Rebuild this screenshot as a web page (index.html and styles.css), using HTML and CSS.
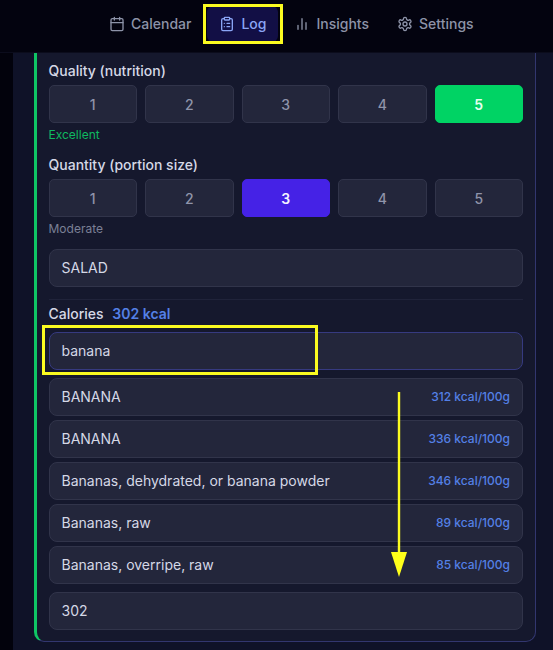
FILE: index.html
```html
<!DOCTYPE html>
<html lang="en">
<head>
  <meta charset="UTF-8">
  <meta name="viewport" content="width=device-width, initial-scale=1.0">
  <title>Log</title>
  <link rel="stylesheet" href="styles.css">
</head>
<body>
  <nav class="topnav">
    <a class="tab">
      <svg class="icon" viewBox="0 0 24 24"><path d="M8 2v4M16 2v4"/><rect x="3" y="4" width="18" height="18" rx="2"/><path d="M3 10h18"/></svg>
      Calendar
    </a>
    <a class="tab active">
      <svg class="icon" viewBox="0 0 24 24"><rect x="8" y="2" width="8" height="4" rx="1"/><path d="M16 4h2a2 2 0 0 1 2 2v14a2 2 0 0 1-2 2H6a2 2 0 0 1-2-2V6a2 2 0 0 1 2-2h2"/><path d="M12 11h4M12 16h4M8 11h.01M8 16h.01"/></svg>
      Log
    </a>
    <a class="tab">
      <svg class="icon" viewBox="0 0 24 24"><path d="M18 20V10M12 20V4M6 20v-6"/></svg>
      Insights
    </a>
    <a class="tab">
      <svg class="icon" viewBox="0 0 24 24"><path d="M12.22 2h-.44a2 2 0 0 0-2 2v.18a2 2 0 0 1-1 1.73l-.43.25a2 2 0 0 1-2 0l-.15-.08a2 2 0 0 0-2.73.73l-.22.38a2 2 0 0 0 .73 2.73l.15.1a2 2 0 0 1 1 1.72v.51a2 2 0 0 1-1 1.74l-.15.09a2 2 0 0 0-.73 2.73l.22.38a2 2 0 0 0 2.73.73l.15-.08a2 2 0 0 1 2 0l.43.25a2 2 0 0 1 1 1.73V20a2 2 0 0 0 2 2h.44a2 2 0 0 0 2-2v-.18a2 2 0 0 1 1-1.73l.43-.25a2 2 0 0 1 2 0l.15.08a2 2 0 0 0 2.73-.73l.22-.39a2 2 0 0 0-.73-2.73l-.15-.08a2 2 0 0 1-1-1.74v-.5a2 2 0 0 1 1-1.74l.15-.09a2 2 0 0 0 .73-2.73l-.22-.38a2 2 0 0 0-2.73-.73l-.15.08a2 2 0 0 1-2 0l-.43-.25a2 2 0 0 1-1-1.73V4a2 2 0 0 0-2-2z"/><circle cx="12" cy="12" r="3"/></svg>
      Settings
    </a>
  </nav>

  <main class="page">
    <section class="card">
      <div class="field-label">Quality (nutrition)</div>
      <div class="rating">
        <button class="rate">1</button>
        <button class="rate">2</button>
        <button class="rate">3</button>
        <button class="rate">4</button>
        <button class="rate green">5</button>
      </div>
      <div class="hint good">Excellent</div>

      <div class="field-label second">Quantity (portion size)</div>
      <div class="rating">
        <button class="rate">1</button>
        <button class="rate">2</button>
        <button class="rate indigo">3</button>
        <button class="rate">4</button>
        <button class="rate">5</button>
      </div>
      <div class="hint">Moderate</div>

      <div class="box name-box">SALAD</div>
      <hr class="divider">

      <div class="field-label calories">Calories <span class="kcal">302 kcal</span></div>
      <div class="box search-box">banana</div>

      <ul class="results">
        <li class="box result"><span>BANANA</span><span class="per100">312 kcal/100g</span></li>
        <li class="box result"><span>BANANA</span><span class="per100">336 kcal/100g</span></li>
        <li class="box result"><span>Bananas, dehydrated, or banana powder</span><span class="per100">346 kcal/100g</span></li>
        <li class="box result"><span>Bananas, raw</span><span class="per100">89 kcal/100g</span></li>
        <li class="box result"><span>Bananas, overripe, raw</span><span class="per100">85 kcal/100g</span></li>
      </ul>

      <div class="box amount-box">302</div>
    </section>
  </main>

  <!-- annotations drawn on top of the screenshot -->
  <div class="mark mark-log"></div>
  <div class="mark mark-search"></div>
  <svg class="arrow" viewBox="0 0 20 186"><path d="M10 0V160" stroke="#fbfb20" stroke-width="2.4" fill="none"/><path d="M2 160H18L10 185z" fill="#ffff1a"/></svg>
</body>
</html>
```

FILE: styles.css
```css
* {
  box-sizing: border-box;
}
html, body {
  height: 650px;
  overflow: hidden;
}
body {
  margin: 0;
  position: relative;
  background: #02020c;
  font-family: 'Inter', sans-serif;
  color: #d5d8e6;
}
.topnav {
  display: flex;
  align-items: center;
  height: 53px;
  padding: 0 0 5px 97px;
  background: #03030f;
  border-bottom: 1px solid #0b0c1c;
}
.tab {
  display: flex;
  align-items: center;
  gap: 6px;
  height: 36px;
  margin-right: 4px;
  padding: 0 12px;
  border-radius: 6px;
  font-size: 14px;
  font-weight: 500;
  color: #8d93a8;
}
.tab.active {
  background: #120f45;
  color: #8aa5f5;
}
.icon {
  width: 16px;
  height: 16px;
  fill: none;
  stroke: currentColor;
  stroke-width: 2;
  stroke-linecap: round;
  stroke-linejoin: round;
}
.page {
  margin-left: 13px;
  height: 597px;
  padding: 0 17px 0 21px;
  background: #0f1228;
}
.card {
  height: 589px;
  padding: 9px 12px 0 11.5px;
  background: #15182d;
  border-left: 3px solid #0fc565;
  border-right: 1px solid #32366f;
  border-bottom: 1px solid #32366f;
  border-radius: 0 0 10px 10px;
}
.field-label {
  height: 17px;
  line-height: 17px;
  font-size: 14px;
  font-weight: 500;
  color: #d5d8e6;
}
.field-label.second {
  margin-top: 14px;
}
.rating {
  display: grid;
  grid-template-columns: repeat(5, 1fr);
  gap: 8px;
  margin-top: 6px;
}
.rate {
  height: 38px;
  padding: 0;
  background: #23263b;
  border: 1px solid #31344a;
  border-radius: 5px;
  font-family: inherit;
  font-size: 14px;
  font-weight: 500;
  color: #8f94aa;
}
.rate.green {
  background: #00d364;
  border-color: #00d364;
  color: #e6fff0;
  font-weight: 600;
}
.rate.indigo {
  background: #4522e6;
  border-color: #4522e6;
  color: #f4f3ff;
  font-weight: 600;
}
.hint {
  height: 15px;
  line-height: 15px;
  margin-top: 4px;
  font-size: 12px;
  color: #7b8096;
}
.hint.good {
  color: #0fb860;
}
.box {
  height: 38px;
  line-height: 36px;
  padding: 0 12px;
  background: #23263b;
  border: 1px solid #31344a;
  border-radius: 8px;
  font-size: 14px;
  color: #d5d8e6;
}
.name-box {
  margin-top: 13px;
}
.divider {
  height: 1px;
  margin: 12px 0 0;
  border: 0;
  background: #20233a;
}
.calories {
  margin-top: 5px;
}
.kcal {
  margin-left: 5px;
  font-weight: 600;
  color: #5480e6;
}
.search-box {
  margin-top: 10px;
  border-color: #363a80;
}
.results {
  list-style: none;
  margin: 8px 0 0;
  padding: 0;
  display: flex;
  flex-direction: column;
  gap: 4px;
}
.result {
  display: flex;
  justify-content: space-between;
}
.per100 {
  font-size: 12px;
  font-weight: 500;
  color: #5480e6;
}
.amount-box {
  margin-top: 8px;
}
.mark {
  position: absolute;
  border: 3px solid #fbfb20;
}
.mark-log {
  left: 203px;
  top: 4px;
  width: 80px;
  height: 40px;
}
.mark-search {
  left: 42px;
  top: 325px;
  width: 276px;
  height: 50px;
}
.arrow {
  position: absolute;
  left: 389px;
  top: 392px;
  width: 20px;
  height: 186px;
}
```
